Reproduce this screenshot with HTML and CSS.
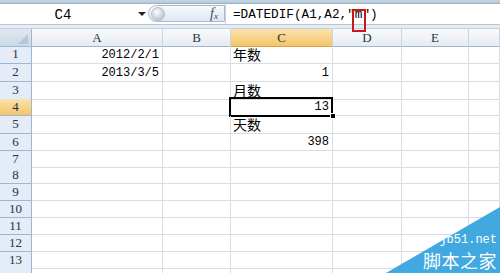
FILE: index.html
```html
<!DOCTYPE html>
<html lang="zh-CN">
<head>
  <meta charset="UTF-8">
  <title>DATEDIF</title>
  <link rel="stylesheet" href="styles.css">
</head>
<body>

<div class="app">
  <div class="top-edge"></div>

  <div class="formula-bar">
    <div class="name-box"><span class="name">C4</span><span class="arrow"></span></div>
    <div class="fx-pill"><span class="knob"></span><span class="fx">f<sub>x</sub></span></div>
    <div class="formula">=DATEDIF(A1,A2,"<span class="mark">m</span>")</div>
  </div>
  <div class="gap"></div>

  <div class="sheet">
    <div class="row head">
      <div class="corner"><span></span></div>
      <div class="ch">A</div><div class="ch">B</div><div class="ch on">C</div><div class="ch">D</div><div class="ch">E</div><div class="ch last"></div>
    </div>
    <div class="row h18">
      <div class="rh">1</div><div class="c num">2012/2/1</div><div class="c"></div><div class="c zh">年数</div><div class="c"></div><div class="c"></div><div class="c"></div>
    </div>
    <div class="row h18">
      <div class="rh">2</div><div class="c num">2013/3/5</div><div class="c"></div><div class="c num">1</div><div class="c"></div><div class="c"></div><div class="c"></div>
    </div>
    <div class="row h17">
      <div class="rh">3</div><div class="c"></div><div class="c"></div><div class="c zh">月数</div><div class="c"></div><div class="c"></div><div class="c"></div>
    </div>
    <div class="row h17">
      <div class="rh on">4</div><div class="c"></div><div class="c"></div><div class="c num sel">13</div><div class="c"></div><div class="c"></div><div class="c"></div>
    </div>
    <div class="row h18">
      <div class="rh">5</div><div class="c"></div><div class="c"></div><div class="c zh">天数</div><div class="c"></div><div class="c"></div><div class="c"></div>
    </div>
    <div class="row h17">
      <div class="rh">6</div><div class="c"></div><div class="c"></div><div class="c num">398</div><div class="c"></div><div class="c"></div><div class="c"></div>
    </div>
    <div class="row h16">
      <div class="rh">7</div><div class="c"></div><div class="c"></div><div class="c"></div><div class="c"></div><div class="c"></div><div class="c"></div>
    </div>
    <div class="row h17">
      <div class="rh">8</div><div class="c"></div><div class="c"></div><div class="c"></div><div class="c"></div><div class="c"></div><div class="c"></div>
    </div>
    <div class="row h17">
      <div class="rh">9</div><div class="c"></div><div class="c"></div><div class="c"></div><div class="c"></div><div class="c"></div><div class="c"></div>
    </div>
    <div class="row h17">
      <div class="rh">10</div><div class="c"></div><div class="c"></div><div class="c"></div><div class="c"></div><div class="c"></div><div class="c"></div>
    </div>
    <div class="row h17">
      <div class="rh">11</div><div class="c"></div><div class="c"></div><div class="c"></div><div class="c"></div><div class="c"></div><div class="c"></div>
    </div>
    <div class="row h17">
      <div class="rh">12</div><div class="c"></div><div class="c"></div><div class="c"></div><div class="c"></div><div class="c"></div><div class="c"></div>
    </div>
    <div class="row h16">
      <div class="rh">13</div><div class="c"></div><div class="c"></div><div class="c"></div><div class="c"></div><div class="c"></div><div class="c"></div>
    </div>
    <div class="row h17">
      <div class="rh"></div><div class="c"></div><div class="c"></div><div class="c"></div><div class="c"></div><div class="c"></div><div class="c"></div>
    </div>
  </div>

  <div class="watermark">
    <div class="wm-site">jb51.net</div>
    <div class="wm-name">脚本之家</div>
  </div>
</div>

</body>
</html>
```

FILE: styles.css
```css
body {
  margin: 0;
  background: #fff;
  overflow: hidden;
}

.app {
  position: relative;
  width: 500px;
  height: 273px;
  overflow: hidden;
  font-family: "Liberation Mono", "Noto Sans CJK SC", monospace;
  color: #000;
}

.top-edge {
  height: 3px;
  background: linear-gradient(#c6d6e2, #b4c8d8);
  border-bottom: 1px solid #9fb3c6;
}

/* formula bar */
.formula-bar {
  display: flex;
  height: 20px;
  background: #fff;
  border-bottom: 1px solid #b8c6d6;
}

.name-box {
  width: 148px;
  display: flex;
  align-items: center;
  box-sizing: border-box;
}

.name {
  width: 126px;
  text-align: center;
  font-size: 14px;
  padding-top: 2px;
}

.arrow {
  margin-left: 12px;
  width: 0;
  height: 0;
  border-left: 4px solid transparent;
  border-right: 4px solid transparent;
  border-top: 4px solid #222;
}

.fx-pill {
  width: 77px;
  margin: 1px 0 2px;
  display: flex;
  align-items: center;
  justify-content: space-between;
  background: linear-gradient(#f7f9fc, #dfe7f1);
  border: 1px solid #a9b9cd;
  border-radius: 10px 0 0 10px;
  box-sizing: border-box;
  padding: 0 6px 0 2px;
}

.knob {
  width: 12px;
  height: 12px;
  border-radius: 50%;
  background: radial-gradient(circle at 40% 35%, #fff, #c9d0d9 60%, #9fa9b5);
  border: 1px solid #b5bfcb;
}

.fx {
  font-family: "Liberation Serif", serif;
  font-style: italic;
  font-size: 14px;
  color: #3f4d5e;
  line-height: 1;
}

.fx sub {
  font-size: 9px;
  vertical-align: -1px;
}

.formula {
  flex: 1;
  border-left: 1px solid #c9d3df;
  padding-left: 7px;
  font-size: 12.7px;
  line-height: 22px;
  position: relative;
}

.mark {
  position: relative;
}

.mark::after {
  content: "";
  position: absolute;
  left: -3px;
  top: 2px;
  width: 10px;
  height: 19px;
  border: 2px solid #c8161d;
}

.gap {
  height: 3px;
  background: #e6ecf3;
  border-bottom: 1px solid #c5d1df;
}

/* grid */
.sheet {
  display: flex;
  flex-direction: column;
}

.row {
  display: grid;
  grid-template-columns: 32px 131px 68px 102px 69px 67px 1fr;
}

.head { height: 17px; }
.h16 { height: 16px; }
.h17 { height: 17px; }
.h18 { height: 18px; }

.corner {
  background: linear-gradient(#dfe7f1, #cdd9e7);
  border-right: 1px solid #9eb6ce;
  border-bottom: 1px solid #9eb6ce;
  position: relative;
}

.corner span {
  position: absolute;
  right: 3px;
  bottom: 2px;
  width: 0;
  height: 0;
  border-left: 10px solid transparent;
  border-bottom: 10px solid #b7c7d8;
}

.ch {
  background: linear-gradient(#f8fafc, #e6ebf1);
  border-right: 1px solid #c9d4e0;
  border-bottom: 1px solid #9eb6ce;
  font-family: "Liberation Serif", serif;
  font-size: 13px;
  text-align: center;
  line-height: 17px;
  color: #27323f;
}

.ch.on {
  background: linear-gradient(#fbe2ac, #f3c56a);
  border-bottom-color: #dca04a;
}

.rh {
  background: #e4ecf7;
  border-right: 1px solid #9eb6ce;
  border-bottom: 1px solid #9eb6ce;
  font-family: "Liberation Serif", serif;
  font-size: 13px;
  text-align: center;
  line-height: 16px;
  color: #27323f;
}

.rh.on {
  background: linear-gradient(#fbe2ac, #f3c56a);
}

.c {
  border-right: 1px solid #d8dde4;
  border-bottom: 1px solid #d8dde4;
  font-size: 12px;
  display: flex;
  align-items: flex-end;
  padding: 0 3px 1px;
  position: relative;
  min-width: 0;
}

.num {
  justify-content: flex-end;
}

.zh {
  font-family: "Noto Sans CJK SC", sans-serif;
  font-size: 14px;
  line-height: 16px;
  padding-left: 2px;
}

.sel::after {
  content: "";
  position: absolute;
  left: -2px;
  top: -2px;
  right: -1px;
  bottom: -2px;
  border: 2px solid #000;
}

.sel::before {
  content: "";
  position: absolute;
  right: -4px;
  bottom: -4px;
  width: 4px;
  height: 4px;
  background: #000;
  border: 1px solid #fff;
  z-index: 1;
}

/* watermark */
.watermark {
  position: absolute;
  right: 0;
  bottom: 0;
  width: 114px;
  height: 66px;
  background: #41a8e0;
  clip-path: polygon(100% 0, 100% 100%, 0 100%);
  color: #fff;
  text-align: right;
  box-sizing: border-box;
  padding: 26px 3px 0 0;
}

.wm-site {
  font-family: "Liberation Mono", monospace;
  font-size: 12px;
  line-height: 14px;
}

.wm-name {
  font-family: "Noto Sans CJK SC", sans-serif;
  font-size: 18px;
  line-height: 26px;
  letter-spacing: 0.5px;
}
```
